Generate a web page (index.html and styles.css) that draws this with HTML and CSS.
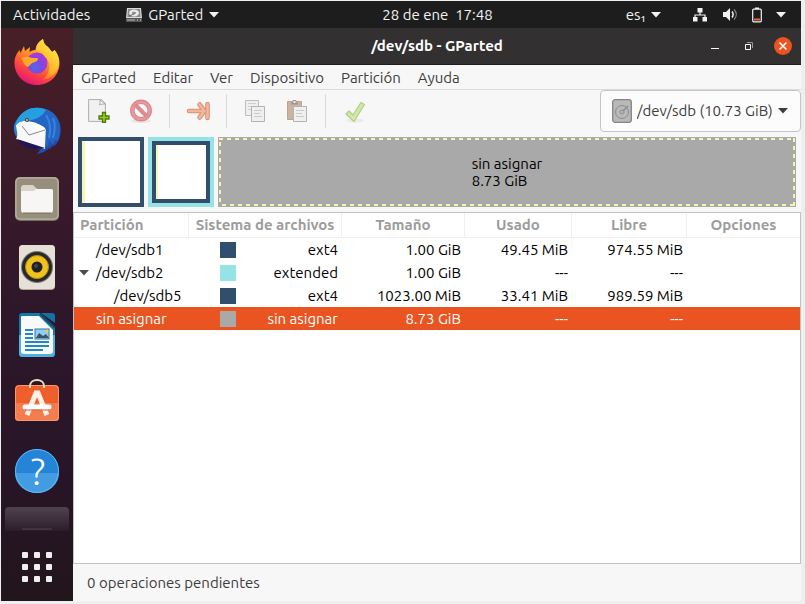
FILE: index.html
```html
<!DOCTYPE html>
<html lang="es">
<head>
<meta charset="utf-8">
<title>/dev/sdb - GParted</title>
<link rel="stylesheet" href="styles.css">
</head>
<body>
<div class="desktop">
  <header class="topbar">
    <div class="topbar-left">
      <button class="top-item">Actividades</button>
      <button class="top-item app-item">
        <svg width="16" height="14" viewBox="0 0 16 14" aria-hidden="true"><path d="M1 0h14l1 10v4H0v-4z" fill="#d9d9d9"/><path d="M2 1h12l.6 8H1.4z" fill="#8b8b8b"/><ellipse cx="8" cy="5" rx="5" ry="3.4" fill="#e8e8e8"/><ellipse cx="8" cy="5" rx="2" ry="1.2" fill="#8a8a8a"/><path d="M3 8l5-2" stroke="#666"/><path d="M0 10h16v4H0z" fill="#555"/><path d="M1 11h8v2H1z" fill="#888"/><path d="M11 12h1m2 0h1" stroke="#ddd"/></svg>
        GParted
        <svg class="caret" width="10" height="6" viewBox="0 0 10 6" aria-hidden="true"><path d="M0 0h10L5 5.500z" fill="currentColor"/></svg>
      </button>
    </div>
    <button class="top-item clock">28 de ene&nbsp; 17:48</button>
    <div class="topbar-right">
      <button class="top-item lang">es₁ <svg width="10" height="6" viewBox="0 0 10 6" aria-hidden="true"><path d="M0 0h10L5 5.500z" fill="currentColor"/></svg></button>
      <button class="top-item tray" aria-label="Sistema">
        <svg width="16" height="16" viewBox="0 0 16 16" aria-hidden="true"><path d="M5.500 1h5v4.500h-5zM1 10h4.500v4.500H1zM10.500 10H15v4.500h-4.500z" fill="#f2f2f2"/><path d="M8 5v3M3 11V8h10v3" fill="none" stroke="#f2f2f2" stroke-width="1.200"/></svg>
        <svg width="16" height="16" viewBox="0 0 16 16" aria-hidden="true"><path d="M1 5h3l4-4v13l-4-4H1z" fill="#f2f2f2"/><path d="M10 4.500c1.500 2 1.500 4 0 6" fill="none" stroke="#f2f2f2" stroke-width="1.500"/><path d="M12 2.500c3 3 3 7 0 10" fill="none" stroke="#888" stroke-width="1.200"/></svg>
        <svg width="10" height="16" viewBox="0 0 10 16" aria-hidden="true"><rect x=".7" y="2.200" width="8.600" height="12.600" rx="1" fill="none" stroke="#f2f2f2" stroke-width="1.200"/><path d="M3 .5h4v1.500H3z" fill="#f2f2f2"/><path d="M2 11.500h6v2H2z" fill="#f0643a"/></svg>
        <svg width="10" height="6" viewBox="0 0 10 6" aria-hidden="true"><path d="M0 0h10L5 5.500z" fill="currentColor"/></svg>
      </button>
    </div>
  </header>

  <nav class="dock" aria-label="Lanzador">
    <button class="dock-app" aria-label="Firefox">
      <svg width="48" height="48" viewBox="0 0 48 48">
        <defs>
          <linearGradient id="fx" x1=".8" y1="0" x2=".3" y2="1"><stop offset="0" stop-color="#ffe63c"/><stop offset=".4" stop-color="#ff9a23"/><stop offset=".7" stop-color="#ff4a3c"/><stop offset="1" stop-color="#e3127a"/></linearGradient>
          <linearGradient id="fx2" x1=".8" y1="0" x2=".3" y2="1"><stop offset="0" stop-color="#fff24a"/><stop offset=".7" stop-color="#ffb02b"/><stop offset="1" stop-color="#ff5b2e"/></linearGradient>
          <radialGradient id="fxg" cx=".4" cy=".7" r=".7"><stop offset="0" stop-color="#5468e8"/><stop offset=".5" stop-color="#7f47e0"/><stop offset="1" stop-color="#b136dd"/></radialGradient>
        </defs>
        <path d="M24 47C11 47 1.500 37 1.500 25c0-6 2.500-10 5-13l1 3 3.500-7 1 5 5-4-.5 5c2-1.500 4-2 6-2 .5-5 3-8 7.500-11 .5 4 2 6 5 8l4 5c1.500-1 2-1 2.500-2 3 4 5 8 5 13C46.500 37 37 47 24 47z" fill="url(#fx)"/>
        <path d="M23 13c0-5 2-9 7-12 .5 4 2 6 5 8l4 5c1-1 2-1 2.500-2C45 16 46 20 46 24c0 9-7 17-17 18 7-5 9-14 6-20-2-5-7-8-12-9z" fill="url(#fx2)"/>
        <circle cx="24" cy="25" r="10.500" fill="url(#fxg)"/>
        <path d="M8 20c4-2 8-1 11 0 3 .5 6-1 6 1 0 3-5 3-7 5-1 1-2 2-3 3-3-1-4-3-5-5 0-2-1-3-2-4z" fill="#ffa72a"/>
        <path d="M28 13c6 1 8 7 8 12-1-3-2-5-4-6z" fill="#ffc42f"/>
      </svg>
    </button>
    <button class="dock-app" aria-label="Thunderbird">
      <svg width="48" height="48" viewBox="0 0 48 48">
        <defs><linearGradient id="tb" x1="0" y1="0" x2="1" y2="1"><stop offset="0" stop-color="#2b9ce4"/><stop offset=".5" stop-color="#2268c9"/><stop offset="1" stop-color="#1a3d9c"/></linearGradient></defs>
        <path d="M13 5c5-5 20-4 27 2s9 15 7 23c-1 5-4 9-7 11l1-3-5 6 1-3c-3 4-8 6-13 7l4-5c-6 1-15-2-21-8C1 30-1 21 3 15c2-4 6-7 10-10z" fill="url(#tb)"/>
        <path d="M3 18c3-5 8-6 14-5l16 5-1 25L3 33c3-4 0-9 0-15z" fill="#f8f8fa"/>
        <path d="M3 19c4-5 8-5 12-4l13 14 6-6-1-6-8-5H11z" fill="#fff"/>
        <path d="M4 33l28 9-7 1C16 44 8 39 4 33z" fill="#20155b"/>
        <path d="M13 5c8-5 21-3 28 4 7 8 7 18 4 26l-3-1-2 5-4-5-1 7-3-2c3-7 2-15-1-18-6-4-12-6-19-6-4 0-7 1-10 5 0-5 5-11 11-15z" fill="#2464c5"/>
        <path d="M9 20l7 9 16-5" fill="none" stroke="#888" stroke-width="1"/>
        <path d="M14 4c6-3 14-3 19 0-3 5-8 10-21 11-5 0-8 2-10 6 1-8 6-14 12-17z" fill="#249fe2"/><circle cx="14" cy="14" r="2" fill="#554337"/><circle cx="14" cy="14" r="1" fill="#f4c154"/>
        <path d="M33 9c5 8 5 15 3 23m4-20c3 7 2 13 0 20" fill="none" stroke="#3b82db" stroke-width="2"/>
      </svg>
    </button>
    <button class="dock-app" aria-label="Archivos">
      <svg width="48" height="48" viewBox="0 0 48 48">
        <rect x="2" y="3" width="44" height="44" rx="5" fill="#756f60"/><rect x="2" y="3" width="44" height="43" rx="5" fill="#a39b87"/><rect x="3" y="4" width="42" height="41" rx="4" fill="#968f7c" stroke="#bbb5a5"/>
        <path d="M8 14c0-2 1-3 3-3h9l4 4v6H8z" fill="#d9d4c9"/><path d="M8 17h13l2-2h15c2 0 2 1 2 2v19c0 2-1 3-3 3H11c-2 0-3-1-3-3z" fill="#f7f6f4"/><path d="M10 39h28" stroke="#77705f"/>
      </svg>
    </button>
    <button class="dock-app" aria-label="Rhythmbox">
      <svg width="48" height="48" viewBox="0 0 48 48">
        <rect x="6" y="3" width="36" height="45" rx="4" fill="#aba698"/><rect x="6" y="3" width="36" height="44" rx="4" fill="#e5e1d6"/><circle cx="24" cy="25" r="16" fill="#777"/><circle cx="24" cy="25" r="15" fill="#28282a"/><circle cx="24" cy="25" r="11.500" fill="#f0c21b"/><circle cx="24" cy="25" r="11.500" fill="none" stroke="#b18c16"/><circle cx="24" cy="25" r="5.500" fill="#202124"/><circle cx="23" cy="24" r="2" fill="#454545"/>
      </svg>
    </button>
    <button class="dock-app" aria-label="LibreOffice Writer">
      <svg width="48" height="48" viewBox="0 0 48 48">
        <path d="M10 3h17l15 14v26c0 3-1 4-4 4H10c-3 0-4-1-4-4V7c0-3 1-4 4-4z" fill="#1678aa"/><path d="M6 25h36v18c0 3-1 4-4 4H10c-3 0-4-1-4-4z" fill="#4eb1df"/><path d="M9 6h17l14 14v21c0 2-1 3-3 3H11c-2 0-3-1-3-3V8c0-1 0-2 1-2z" fill="#f7f9fa"/><path d="M28 3h11c2 0 3 1 3 3v7z" fill="#13739f"/><path d="M27 4l15 14" stroke="#134b69" stroke-width="2"/>
        <path d="M12 20h8m-8 4h8m-8 4h8m-8 4h24m-24 4h24m-24 4h18" stroke="#2588bd" stroke-width="2"/><rect x="22" y="19" width="14" height="10" fill="#91cdf0" stroke="#3279a5"/><path d="M23 28l3-5 4 3 3-2 3 4z" fill="#3d5461"/><circle cx="34" cy="21" r="1.500" fill="#f9c833"/>
      </svg>
    </button>
    <button class="dock-app" aria-label="Software de Ubuntu">
      <svg width="48" height="48" viewBox="0 0 48 48">
        <rect x="2" y="7" width="44" height="36" rx="4" fill="#ef5f2c"/><path d="M2 25h44v14c0 3-1 4-4 4H6c-3 0-4-1-4-4z" fill="#f47c4d"/><rect x="2.500" y="7.500" width="43" height="35" rx="4" fill="none" stroke="#f99871"/><path d="M17 10V8c0-8 14-8 14 0v2" fill="none" stroke="#eee0bd" stroke-width="2"/><path d="M14 37l9-22h2l9 22" fill="none" stroke="#fff1e8" stroke-width="5"/><path d="M12 29h24" stroke="#fff" stroke-width="5" stroke-linecap="round"/><path d="M12 32h24" stroke="#ce6544"/>
      </svg>
    </button>
    <button class="dock-app" aria-label="Ayuda">
      <svg width="48" height="48" viewBox="0 0 48 48"><circle cx="24" cy="25" r="22" fill="#2384d8"/><path d="M2 27h44a22 20 0 0 1-44 0z" fill="#439be1"/><circle cx="24" cy="25" r="21.500" fill="none" stroke="#62b8f0"/><text class="help-mark" x="25" y="39" text-anchor="middle">?</text></svg>
    </button>
    <div class="dock-tail"><i></i></div>
    <button class="apps" aria-label="Mostrar aplicaciones">
      <svg width="30" height="30" viewBox="0 0 30 30" fill="#f0eeee"><rect width="6" height="6" rx="1"/><rect x="12" width="6" height="6" rx="1"/><rect x="24" width="6" height="6" rx="1"/><rect y="12" width="6" height="6" rx="1"/><rect x="12" y="12" width="6" height="6" rx="1"/><rect x="24" y="12" width="6" height="6" rx="1"/><rect y="24" width="6" height="6" rx="1"/><rect x="12" y="24" width="6" height="6" rx="1"/><rect x="24" y="24" width="6" height="6" rx="1"/></svg>
    </button>
  </nav>

  <main class="window">
    <div class="titlebar">
      <h1>/dev/sdb - GParted</h1>
      <div class="controls">
        <button aria-label="Minimizar"><svg width="10" height="10" viewBox="0 0 10 10"><path d="M1 7.500h8" stroke="#fff"/></svg></button>
        <button aria-label="Restaurar"><svg width="10" height="10" viewBox="0 0 10 10" fill="none"><path d="M3 1.500h5.500V7" stroke="#8f9a94"/><path d="M1.500 3.500h5v5h-5z" stroke="#fff"/></svg></button>
        <button class="close" aria-label="Cerrar"><svg width="10" height="10" viewBox="0 0 10 10"><path d="M1.500 1.500l7 7m0-7l-7 7" stroke="#fff" stroke-width="1.600"/></svg></button>
      </div>
    </div>
    <nav class="menubar" aria-label="Menú">
      <button>GParted</button><button>Editar</button><button>Ver</button><button>Dispositivo</button><button>Partición</button><button>Ayuda</button>
    </nav>
    <div class="toolbar">
      <div class="tools">
        <button aria-label="Nueva">
          <svg width="24" height="24" viewBox="0 0 24 24"><path d="M1.500.5h13l4 4v18h-17z" fill="#e9e9e9" stroke="#b5b5b5"/><path d="M3 2h10v4h4v15H3z" fill="#f1f1f1"/><path d="M13 1c0 3 0 4-1 5 2-1 4-1 6-1z" fill="#fff" stroke="#aaa"/><path d="M15.500 13.500h3v3.500h3.500v3h-3.500v3.500h-3V20H12v-3h3.500z" fill="#9bcb22" stroke="#4c7b08" stroke-width="1.300"/></svg>
        </button>
        <button disabled aria-label="Borrar">
          <svg width="24" height="24" viewBox="0 0 24 24"><ellipse cx="12" cy="22" rx="10" ry="2" fill="#e8e5e6"/><circle cx="12" cy="11.500" r="8.700" fill="none" stroke="#d9858b" stroke-width="4.500"/><circle cx="12" cy="11.500" r="8.500" fill="none" stroke="#e89a9a" stroke-width="2.500"/><path d="M6 5.500l12 12" stroke="#dc8b8f" stroke-width="4"/></svg>
        </button>
        <i class="separator"></i>
        <button disabled aria-label="Redimensionar/Mover">
          <svg width="24" height="24" viewBox="0 0 24 24" fill="none" stroke-linecap="round" stroke-linejoin="round"><path d="M3 12h14M13.500 5.500l5 6.500-5 6.500M21.500 5v14" stroke="#dc8f78" stroke-width="4.600"/><path d="M3 12h14M13.500 5.500l5 6.500-5 6.500M21.500 5v14" stroke="#f0b798" stroke-width="2.600"/></svg>
        </button>
        <i class="separator"></i>
        <button disabled aria-label="Copiar">
          <svg width="24" height="24" viewBox="0 0 24 24"><path d="M2.500 1.500h13v15h-13z" fill="#efefef" stroke="#bdbdbd"/><path d="M5 4.500h8m-8 3h8m-8 3h6" stroke="#cfcfcf"/><path d="M8.500 7.500h13v15h-13z" fill="#efefef" stroke="#b3b3b3"/><path d="M11 11.500h8m-8 3h6m-6 3h8" stroke="#cacaca"/></svg>
        </button>
        <button disabled aria-label="Pegar">
          <svg width="24" height="24" viewBox="0 0 24 24"><path d="M2.500 2.500h14v18h-14z" fill="#cbb49d" stroke="#bba58e"/><path d="M6 3.500h7v2H6z" fill="#999"/><path d="M8 1.500h3v3H8z" fill="#eee" stroke="#999"/><path d="M8.500 7.500h13v15h-13z" fill="#efefef" stroke="#b3b3b3"/><path d="M11 11.500h8m-8 3h6m-6 3h8" stroke="#cacaca"/></svg>
        </button>
        <i class="separator"></i>
        <button disabled aria-label="Aplicar">
          <svg width="24" height="24" viewBox="0 0 24 24"><ellipse cx="13" cy="21.500" rx="9" ry="2" fill="#ebebeb"/><path d="M4 15l3-3 4 4 8-12.500 3.500 2-10.500 17z" fill="#d5e8a0" stroke="#b3cf91" stroke-width="1.300" stroke-linejoin="round"/></svg>
        </button>
      </div>
      <label class="device">
        <svg width="20" height="24" viewBox="0 0 20 24" aria-hidden="true"><rect x=".7" y=".7" width="18.600" height="22.600" rx="2.500" fill="#b9b9b9" stroke="#858585" stroke-width="1.300"/><circle cx="10" cy="13" r="6.500" fill="none" stroke="#8c8c8c"/><circle cx="10" cy="13" r="2" fill="none" stroke="#8c8c8c"/><path d="M11 12l5-5" stroke="#888" stroke-width="1.300"/></svg>
        <select aria-label="Dispositivo"><option>/dev/sdb (10.73 GiB)</option></select>
        <svg class="device-arrow" width="10" height="6" viewBox="0 0 10 6" aria-hidden="true"><path d="M0 0h10L5 5.500z" fill="#3d3d3d"/></svg>
      </label>
    </div>
    <section class="disk" aria-label="Disco">
      <div class="part primary"><i></i></div>
      <div class="part extended"><div class="part primary"><i></i></div></div>
      <div class="part unallocated"><p>sin asignar<br>8.73 GiB</p></div>
    </section>
    <div class="table-area">
      <table>
        <colgroup><col class="c-name"><col class="c-fs"><col class="c-size"><col class="c-used"><col class="c-free"><col></colgroup>
        <thead><tr><th>Partición</th><th>Sistema de archivos</th><th>Tamaño</th><th>Usado</th><th>Libre</th><th>Opciones</th></tr></thead>
        <tbody>
          <tr><td class="name">/dev/sdb1</td><td><div class="fs"><i class="swatch ext4"></i>ext4</div></td><td>1.00 GiB</td><td>49.45 MiB</td><td>974.55 MiB</td><td></td></tr>
          <tr><td class="name parent"><svg width="10" height="6" viewBox="0 0 10 6" aria-hidden="true"><path d="M0 0h10L5 5.500z" fill="#4d4d4d"/></svg>/dev/sdb2</td><td><div class="fs"><i class="swatch ext"></i>extended</div></td><td>1.00 GiB</td><td>---</td><td>---</td><td></td></tr>
          <tr><td class="name child">/dev/sdb5</td><td><div class="fs"><i class="swatch ext4"></i>ext4</div></td><td>1023.00 MiB</td><td>33.41 MiB</td><td>989.59 MiB</td><td></td></tr>
          <tr class="selected"><td class="name">sin asignar</td><td><div class="fs"><i class="swatch free"></i>sin asignar</div></td><td>8.73 GiB</td><td>---</td><td>---</td><td></td></tr>
        </tbody>
      </table>
    </div>
    <footer class="status">0 operaciones pendientes</footer>
  </main>
</div>
</body>
</html>
```
FILE: styles.css
```css
* { box-sizing: border-box; }
body {
  margin: 0;
  background: #efefef;
  color: #3d3d3d;
  font: 15px/20px Ubuntu, "Noto Sans", sans-serif;
}
button, select {
  margin: 0;
  padding: 0;
  border: 0;
  background: none;
  color: inherit;
  font: inherit;
}
svg { display: block; flex: none; }
.desktop {
  display: grid;
  grid-template: 27px 1fr / 72px 1fr;
  min-height: calc(100vh - 4px);
  margin: 1px 4px 3px 1px;
}

/* top panel */
.topbar {
  grid-column: 1 / -1;
  display: grid;
  grid-template-columns: 1fr auto 1fr;
  align-items: center;
  padding: 0 15px 0 12px;
  background: #1d1d1d;
  color: #f2f2f2;
}
.topbar-left, .topbar-right, .top-item { display: flex; align-items: center; }
.topbar-left { gap: 36px; }
.topbar-right { justify-content: flex-end; gap: 31px; }
.app-item { gap: 6px; }
.lang { gap: 5px; }
.clock { padding-left: 76px; }
.tray { gap: 14px; }

/* launcher */
.dock {
  display: flex;
  flex-direction: column;
  align-items: center;
  background: linear-gradient(#481f26, #391a2b 28%, #2e172a 50%, #271527 80%, #22151b);
}
.dock-app { display: grid; place-items: center; width: 72px; height: 68px; }
.help-mark { fill: #fff; font-size: 38px; font-weight: 300; }
.dock-tail {
  width: 64px;
  height: 24px;
  margin-top: 3px;
  display: flex;
  align-items: flex-end;
  justify-content: center;
  border-radius: 4px 4px 0 0;
  background: linear-gradient(#50434f, #2b1c2a);
}
.dock-tail i { width: 30px; height: 3px; border-top: 2px solid #40323f; }
.apps { margin: auto 0 19px; }

/* window */
.window { display: flex; flex-direction: column; min-width: 0; background: #f7f7f7; }
.titlebar {
  display: grid;
  grid-template-columns: 1fr auto 1fr;
  align-items: center;
  height: 37px;
  padding: 0 9px;
  background: #323030;
  border-bottom: 1px solid #1e1d1d;
  color: #fff;
}
h1 { grid-column: 2; margin: 0; font-size: 15px; line-height: 20px; }
.controls { display: flex; justify-content: flex-end; gap: 16px; }
.controls button { display: grid; place-items: center; width: 18px; height: 18px; }
.controls .close { background: #e95420; border-radius: 50%; }
.menubar { display: flex; gap: 1px; height: 25px; border-bottom: 1px solid #dcdcdc; }
.menubar button { padding: 1px 8px 0; }
.toolbar { display: flex; justify-content: space-between; height: 47px; }
.tools { display: flex; align-items: center; padding: 0 5px 5px; }
.tools button { display: grid; place-items: center; width: 42px; height: 42px; }
.separator { width: 1px; height: 34px; margin: 0 7px; background: #dadada; }
.device {
  display: flex;
  align-items: center;
  gap: 5px;
  height: 42px;
  padding: 0 12px 0 11px;
  border: 1px solid #c4c4c4;
  border-radius: 4px;
  background: #fcfcfc;
}
.device select { appearance: none; }

/* partition map */
.disk { display: flex; gap: 4px; height: 70px; padding: 0 5px; }
.part { flex: none; width: 66px; }
.primary { border: 4px solid #314e6c; background: #fff; display: flex; }
.primary i { width: 3px; background: #f5f5b5; }
.extended { display: flex; padding: 4px; background: #95e3e5; }
.extended .primary { flex: 1; }
.extended i { width: 2px; }
.unallocated {
  flex: 1;
  display: grid;
  place-items: center;
  border: 1px solid #a9a9a9;
  background:
    repeating-linear-gradient(90deg, #f5f5b0 0 4px, transparent 4px 8px) top / 100% 2px no-repeat,
    repeating-linear-gradient(90deg, transparent 0 3px, #f5f5b0 3px 7px, transparent 7px 8px) bottom / 100% 2px no-repeat,
    repeating-linear-gradient(transparent 0 4px, #f5f5b0 4px 8px) left / 2px 100% no-repeat,
    repeating-linear-gradient(#f5f5b0 0 4px, transparent 4px 8px) right / 2px 100% no-repeat,
    #a9a9a9;
  color: #000;
}
.unallocated p { margin: 0; line-height: 17px; }

/* partition list */
.table-area {
  flex: 1;
  margin-top: 5px;
  border: 1px solid #c2c2c2;
  background: #fff;
}
table { width: 100%; table-layout: fixed; border-collapse: separate; border-spacing: 0; color: #000; line-height: 22px; }
.c-name { width: 115px; }
.c-fs { width: 153px; }
.c-size { width: 123px; }
.c-used { width: 107px; }
.c-free { width: 115px; }
th {
  height: 25px;
  padding: 0;
  border: solid #f0f0f0;
  border-width: 0 1px 1px 0;
  color: #9c9c9c;
  white-space: nowrap;
}
th:first-child { padding-left: 6px; text-align: left; }
th:last-child { border-right: 0; }
td { height: 23px; padding: 0 4px 0 3px; text-align: right; white-space: nowrap; }
td.name { padding-left: 22px; text-align: left; }
td.parent { padding-left: 5px; }
.parent svg { display: inline-block; margin-right: 7px; vertical-align: 2px; }
td.child { padding-left: 40px; }
.fs { display: flex; align-items: center; justify-content: space-between; padding-left: 28px; }
.swatch { width: 16px; height: 16px; }
.ext4 { background: #314e6c; }
.ext { background: #95e3e5; }
.free { background: #a9a9a9; }
.selected { background: #e95420; color: #fff; }
.status { padding: 9px 14px 8px; }
```
